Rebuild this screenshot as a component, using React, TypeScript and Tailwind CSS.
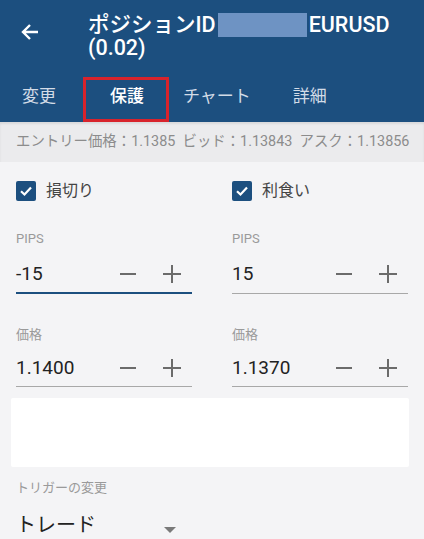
import React from "react";

const jp = { fontFamily: 'Roboto, "Noto Sans CJK JP", sans-serif' };

function Minus() {
  return (
    <svg width="18" height="18" viewBox="0 0 18 18" className="block">
      <line x1="1" y1="9" x2="17" y2="9" stroke="#6b6b6b" strokeWidth="2" />
    </svg>
  );
}
function Plus() {
  return (
    <svg width="20" height="20" viewBox="0 0 20 20" className="block">
      <line x1="1" y1="10" x2="19" y2="10" stroke="#6b6b6b" strokeWidth="2" />
      <line x1="10" y1="1" x2="10" y2="19" stroke="#6b6b6b" strokeWidth="2" />
    </svg>
  );
}

function Check({ label }: { label: string }) {
  return (
    <div className="flex items-center h-[20px]">
      <div className="w-[20px] h-[20px] rounded-[2px] bg-[#1c4f7f] flex items-center justify-center">
        <svg width="14" height="14" viewBox="0 0 14 14">
          <path d="M2 7.2 L5.5 10.5 L12 3.5" stroke="#fff" strokeWidth="2.2" fill="none" />
        </svg>
      </div>
      <span className="ml-[10px] text-[16px] text-[#444]">{label}</span>
    </div>
  );
}

function Field({
  label,
  value,
  focused,
  tight,
}: {
  label: string;
  value: string;
  focused?: boolean;
  tight?: boolean;
}) {
  return (
    <div className="w-[176px]">
      <div className="text-[13px] leading-[14px] text-[#9a9a9a]">{label}</div>
      <div className={tight ? "flex items-center h-[30px] mt-[11px]" : "flex items-center h-[30px] mt-[13px]"}>
        <span className="text-[19px] text-[#222] w-[103px]">{value}</span>
        <Minus />
        <span className="w-[25px]" />
        <Plus />
      </div>
      <div
        className={
          focused
            ? "mt-[3px] h-[2px] bg-[#1c4f7f]"
            : tight
            ? "mt-[3px] h-[1px] bg-[#a8a8a8]"
            : "mt-[4px] h-[1px] bg-[#a8a8a8]"
        }
      />
    </div>
  );
}

export default function App() {
  return (
    <div className="w-[424px] h-[539px] overflow-hidden bg-[#f4f4f6] relative" style={jp}>
      {/* header */}
      <div className="bg-[#1c4f7f] h-[122px] relative">
        <div className="flex pt-[13px]">
          <div className="w-[88px] flex pl-[20px] pt-[9px]">
            <svg width="20" height="20" viewBox="0 0 20 20">
              <path d="M18 10 H3 M10 3 L3 10 L10 17" stroke="#fff" strokeWidth="2.4" fill="none" />
            </svg>
          </div>
          <div className="text-white text-[21.5px] leading-[22px] font-medium">
            <div className="flex items-center">
              <span>ポジションID</span>
              <span className="inline-block w-[89px] h-[24px] bg-[#6e93c3] mx-[2px]" />
              <span>EURUSD</span>
            </div>
            <div>(0.02)</div>
          </div>
        </div>
        <div className="flex mt-[27px] text-[17px] leading-[20px]">
          <span className="ml-[22px] text-[#d3dce7]">変更</span>
          <span className="ml-[54px] text-white font-medium">保護</span>
          <span className="ml-[39px] text-[#d3dce7]">チャート</span>
          <span className="ml-[42px] text-[#d3dce7]">詳細</span>
        </div>
        <div className="absolute left-[83px] top-[77px] w-[86px] h-[45px] border-[3px] border-[#d8232c]" />
      </div>
      {/* info bar */}
      <div className="h-[40px] bg-[#ebebed] flex items-center pl-[16px] text-[14.4px] text-[#8c8c8c] whitespace-nowrap shadow-[inset_0_2px_2px_rgba(0,0,0,0.08)]">
        エントリー価格：1.1385&nbsp;&nbsp;ビッド：1.13843&nbsp;&nbsp;アスク：1.13856
      </div>
      {/* body */}
      <div className="px-[16px]">
        <div className="flex gap-[40px] mt-[19px]">
          <div className="w-[176px]"><Check label="損切り" /></div>
          <div className="w-[176px]"><Check label="利食い" /></div>
        </div>
        <div className="flex gap-[40px] mt-[31px]">
          <Field label="PIPS" value="-15" focused />
          <Field label="PIPS" value="15" />
        </div>
        <div className="flex gap-[40px] mt-[34px]">
          <Field label="価格" value="1.1400" tight />
          <Field label="価格" value="1.1370" tight />
        </div>
      </div>
      <div className="mx-[11px] mt-[11px] h-[69px] bg-white rounded-[2px] w-[398px]" />
      <div className="px-[16px] mt-[13px] text-[13px] leading-[16px] text-[#9a9a9a]">トリガーの変更</div>
      <div className="px-[16px] mt-[17px] flex items-center">
        <span className="text-[20px] leading-[24px] text-[#222] w-[148px]">トレード</span>
        <svg width="12" height="6" viewBox="0 0 12 6" className="mt-[9px]">
          <path d="M0 0 H12 L6 6 Z" fill="#7a7a7a" />
        </svg>
      </div>
    </div>
  );
}
